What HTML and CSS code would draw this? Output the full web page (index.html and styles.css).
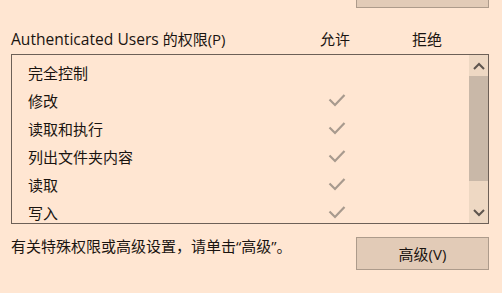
FILE: index.html
```html
<!DOCTYPE html>
<html lang="zh-CN">
<head>
    <meta charset="UTF-8">
    <title>权限</title>
    <link rel="stylesheet" href="styles.css">
</head>
<body>
    <div class="top-row">
        <div class="btn btn-top"></div>
    </div>
    <div class="perm-header">
        <span class="col-name"><span class="latin">Authenticated Users</span> 的权限(P)</span>
        <span class="col-allow">允许</span>
        <span class="col-deny">拒绝</span>
    </div>
    <div class="perm-list">
        <div class="perm-rows" id="permRows"></div>
        <div class="scrollbar">
            <div class="sb-btn">
                <svg width="12" height="8" viewBox="0 0 12 8"><path d="M1 7 L6 2 L11 7" fill="none" stroke="#5e554e" stroke-width="2"/></svg>
            </div>
            <div class="sb-thumb"></div>
            <div class="sb-track"></div>
            <div class="sb-btn">
                <svg width="12" height="8" viewBox="0 0 12 8"><path d="M1 1 L6 6 L11 1" fill="none" stroke="#5e554e" stroke-width="2"/></svg>
            </div>
        </div>
    </div>
    <div class="bottom-row">
        <p class="hint">有关特殊权限或高级设置，请单击“高级”。</p>
        <button class="btn btn-advanced">高级(V)</button>
    </div>
    <script>
        const permissions = [
            { name: '完全控制', allow: false },
            { name: '修改', allow: true },
            { name: '读取和执行', allow: true },
            { name: '列出文件夹内容', allow: true },
            { name: '读取', allow: true },
            { name: '写入', allow: true }
        ];
        const check = '<svg width="18" height="14" viewBox="0 0 18 14"><path d="M1.5 6.5 L7 12 L16.5 2" fill="none" stroke="#a89a8e" stroke-width="2.2"/></svg>';

        const rows = document.getElementById('permRows');
        permissions.forEach(p => {
            const row = document.createElement('div');
            row.className = 'perm-row';
            row.innerHTML = `
                <span class="col-name">${p.name}</span>
                <span class="col-allow">${p.allow ? check : ''}</span>
                <span class="col-deny"></span>
            `;
            rows.appendChild(row);
        });
    </script>
</body>
</html>
```

FILE: styles.css
```css
body {
    margin: 0;
    padding: 0;
    background-color: #ffe6d2;
    font-family: "Open Sans", "Noto Sans CJK SC", sans-serif;
    font-size: 15px;
    color: #1a1410;
}
.btn {
    box-sizing: border-box;
    background-color: #e2cbb7;
    border: 1px solid #ad9b8b;
    font-family: inherit;
    font-size: 15px;
    color: #1a1410;
}
.top-row {
    display: flex;
    justify-content: flex-end;
    padding-right: 13px;
}
.btn-top {
    width: 133px;
    height: 8px;
    border-top: none;
}
.perm-header {
    display: flex;
    align-items: center;
    height: 46px;
    padding-left: 11px;
    box-sizing: border-box;
    line-height: 20px;
}
.perm-header .col-name {
    width: 299px;
    margin-top: 16px;
}
.latin {
    font-size: 15.6px;
}
.perm-header .col-allow,
.perm-header .col-deny {
    width: 50px;
    text-align: center;
    margin-top: 16px;
}
.perm-header .col-deny {
    margin-left: 42px;
}
.perm-list {
    display: flex;
    box-sizing: border-box;
    margin-left: 11px;
    width: 478px;
    height: 170px;
    border: 1px solid #6d6057;
    overflow: hidden;
}
.perm-rows {
    flex: 1;
    padding-top: 3px;
}
.perm-row {
    display: flex;
    align-items: center;
    height: 28px;
}
.perm-row .col-name {
    width: 300px;
    padding-left: 16px;
    box-sizing: border-box;
}
.perm-row .col-allow {
    width: 50px;
    display: flex;
    justify-content: center;
}
.perm-row .col-deny {
    width: 50px;
}
.scrollbar {
    width: 19px;
    display: flex;
    flex-direction: column;
    background-color: #eed8c3;
}
.sb-btn {
    height: 21px;
    display: flex;
    align-items: center;
    justify-content: center;
}
.sb-thumb {
    height: 105px;
    background-color: #c9b8a8;
}
.sb-track {
    flex: 1;
}
.bottom-row {
    display: flex;
    justify-content: space-between;
    align-items: flex-start;
    padding-left: 11px;
    padding-right: 13px;
}
.hint {
    margin: 12px 0 0 0;
    line-height: 20px;
}
.btn-advanced {
    margin-top: 13px;
    width: 133px;
    height: 33px;
    padding: 0;
}
```
